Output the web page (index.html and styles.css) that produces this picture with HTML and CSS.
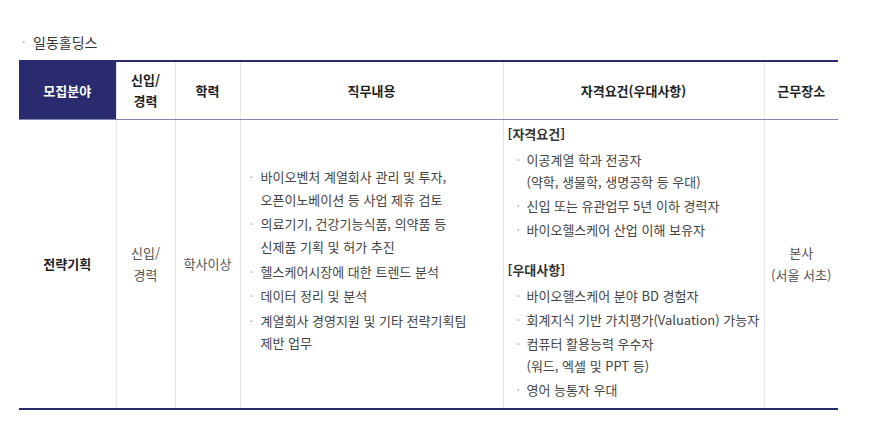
FILE: index.html
```html
<!DOCTYPE html>
<html lang="ko">
<head>
<meta charset="utf-8">
<link rel="stylesheet" href="styles.css">
</head>
<body>
<div class="wrap">
  <h3 class="company"><span class="dot">·</span>일동홀딩스</h3>
  <table class="recruit">
    <colgroup>
      <col class="c1"><col class="c2"><col class="c3"><col class="c4"><col class="c5"><col class="c6">
    </colgroup>
    <thead>
      <tr>
        <th class="first">모집분야</th>
        <th>신입/<br>경력</th>
        <th>학력</th>
        <th>직무내용</th>
        <th>자격요건(우대사항)</th>
        <th>근무장소</th>
      </tr>
    </thead>
    <tbody>
      <tr>
        <td class="field">전략기획</td>
        <td class="center">신입/<br>경력</td>
        <td class="center">학사이상</td>
        <td class="duty">
          <ul class="list">
            <li>바이오벤처 계열회사 관리 및 투자,<br>오픈이노베이션 등 사업 제휴 검토</li>
            <li>의료기기, 건강기능식품, 의약품 등<br>신제품 기획 및 허가 추진</li>
            <li>헬스케어시장에 대한 트렌드 분석</li>
            <li>데이터 정리 및 분석</li>
            <li>계열회사 경영지원 및 기타 전략기획팀<br>제반 업무</li>
          </ul>
        </td>
        <td class="qual">
          <p class="sub">[자격요건]</p>
          <ul class="list">
            <li>이공계열 학과 전공자<br>(약학, 생물학, 생명공학 등 우대)</li>
            <li>신입 또는 유관업무 5년 이하 경력자</li>
            <li>바이오헬스케어 산업 이해 보유자</li>
          </ul>
          <p class="sub gap">[우대사항]</p>
          <ul class="list">
            <li>바이오헬스케어 분야 BD 경험자</li>
            <li>회계지식 기반 가치평가(Valuation) 가능자</li>
            <li>컴퓨터 활용능력 우수자<br>(워드, 엑셀 및 PPT 등)</li>
            <li>영어 능통자 우대</li>
          </ul>
        </td>
        <td class="center">본사<br>(서울 서초)</td>
      </tr>
    </tbody>
  </table>
</div>
</body>
</html>
```

FILE: styles.css
```css
* { box-sizing: border-box; }
html, body {
  margin: 0;
  padding: 0;
  background: #fff;
}
body {
  font-family: "Noto Sans CJK KR", "Noto Sans", sans-serif;
  color: #444;
  font-size: 13px;
}
.wrap {
  padding: 31px 0 0 19px;
  width: 838px;
}
.company {
  margin: 0 0 7px 0;
  font-size: 14px;
  font-weight: 400;
  color: #333;
  line-height: 22px;
  display: flex;
  align-items: center;
}
.company .dot {
  color: #aaa;
  width: 14px;
  padding-left: 3px;
  font-size: 12px;
}
.recruit {
  width: 819px;
  border-collapse: collapse;
  table-layout: fixed;
  border-top: 2px solid #2a2a6e;
  border-bottom: 2px solid #2a2a6e;
}
.c1 { width: 97px; }
.c2 { width: 59px; }
.c3 { width: 65px; }
.c4 { width: 263px; }
.c5 { width: 261px; }
.c6 { width: 74px; }
.recruit th {
  height: 58px;
  font-weight: 700;
  color: #222;
  font-size: 13px;
  line-height: 21px;
  text-align: center;
  vertical-align: middle;
  border-left: 1px solid #e6e6e6;
  border-bottom: 1px solid #8583ad;
  padding: 0;
}
.recruit th.first {
  background: #2a2a6e;
  color: #fff;
  border-left: 0;
}
.recruit td {
  border-left: 1px solid #e6e6e6;
  vertical-align: middle;
  line-height: 22px;
  padding: 0;
}
.recruit td:first-child { border-left: 0; }
.center {
  text-align: center;
  color: #555;
}
.field {
  text-align: center;
  font-weight: 700;
  color: #222;
}
.list {
  list-style: none;
  margin: 0;
  padding: 0;
}
.list li {
  position: relative;
  padding-left: 20px;
  margin-bottom: 2px;
}
.list li::before {
  content: "·";
  position: absolute;
  left: 9px;
  top: 0;
  color: #aaa;
}
.recruit td.duty {
  padding: 0 0 4px 0;
  line-height: 22.6px;
}
.recruit td.qual {
  padding: 3px 0 5px 4px;
}
.qual .list li { padding-left: 19px; }
.sub {
  margin: 0 0 4px 0;
  font-weight: 700;
  color: #333;
}
.sub.gap { margin-top: 18px; }
```
